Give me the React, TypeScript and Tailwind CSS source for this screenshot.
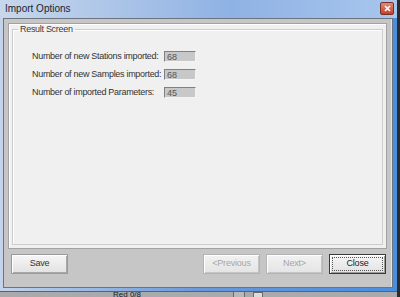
const font = { fontFamily: "'Liberation Sans', Arial, sans-serif" };

const rows = [
  { label: "Number of new Stations imported:", value: "68" },
  { label: "Number of new Samples imported:", value: "68" },
  { label: "Number of imported Parameters:", value: "45" },
];

const Btn = ({ label, disabled, focused }: { label: string; disabled?: boolean; focused?: boolean }) => (
  <button
    className={
      focused
        ? "w-[57px] h-[20px] p-[2px] border border-[#3a3a3a] bg-gradient-to-b from-[#f6f6f6] to-[#e2e2e2] shadow-[inset_1px_1px_0_#fff,inset_-1px_-1px_0_#9c9c9c]"
        : disabled
        ? "w-[57px] h-[20px] p-[2px] border border-[#b4b4b4] bg-gradient-to-b from-[#f2f2f2] to-[#e4e4e4] shadow-[inset_1px_1px_0_#fff,inset_-1px_-1px_0_#c4c4c4]"
        : "w-[57px] h-[20px] p-[2px] border border-[#9a9a9a] bg-gradient-to-b from-[#f6f6f6] to-[#e2e2e2] shadow-[inset_1px_1px_0_#fff,inset_-1px_-1px_0_#a8a8a8]"
    }
  >
    <span
      className={
        "flex h-full items-center justify-center text-[9px] tracking-[-0.2px] " +
        (focused ? "border border-dotted border-[#555] text-[#222]" : "") +
        (disabled ? "text-[#a6a6a6]" : "") +
        (!focused && !disabled ? "text-[#333]" : "")
      }
      style={font}
    >
      {label}
    </span>
  </button>
);

export default function App() {
  return (
    <div className="w-[400px] h-[297px] flex bg-[#2e3032] overflow-hidden" style={font}>
      <div className="w-[397px] flex flex-col">
        {/* Window */}
        <div className="h-[291px] flex flex-col bg-gradient-to-r from-[#c4d4ea] via-[#6a98da] to-[#4a8ee0]">
          {/* Title bar */}
          <div className="h-[18px] flex items-center justify-between pl-[5px] pr-[3px] bg-gradient-to-r from-[#c8d7eb] via-[#8fb2e4] via-[58%] to-[#a8c6ee]">
            <span className="text-[10px] text-[#1c2230] leading-none">Import Options</span>
            <div className="w-[14px] h-[13px] mt-[-2px] rounded-[2px] border border-[#7a3026] bg-gradient-to-b from-[#e08a74] to-[#c0402a] flex items-center justify-center">
              <svg width="7" height="7" viewBox="0 0 7 7">
                <path d="M1 1 L6 6 M6 1 L1 6" stroke="#fff" strokeWidth="1.6" />
              </svg>
            </div>
          </div>

          {/* Client area */}
          <div className="flex-1 flex flex-col ml-[3px] mr-[4px] mb-[3px] border border-[#6c7480] bg-[#c6c6c6] shadow-[inset_-1px_0_0_#e4e4e4]">
            <div className="h-[226px] mt-[4px] ml-[4px] mr-[5px] border border-[#a2a2a2] bg-[#f0f0f0] shadow-[inset_1px_1px_0_#fff] px-[3px] pt-[1px] pb-[3px] flex">
              <fieldset className="flex-1 border border-[#cdcdcd] shadow-[inset_1px_1px_0_#fff]">
                <legend className="ml-[5px] px-[2px] text-[9px] tracking-[-0.3px] text-[#3a3a3a] leading-none">Result Screen</legend>
                <div className="grid grid-cols-[132px_32px] gap-y-[7px] mt-[17px] ml-[19px]">
                  {rows.map((r) => (
                    <div key={r.label} className="contents">
                      <span className="text-[9px] tracking-[-0.3px] text-[#333] leading-[11px]">{r.label}</span>
                      <div className="h-[11px] border border-t-[#808080] border-l-[#808080] border-b-[#f4f4f4] border-r-[#f4f4f4] bg-[#c8c8c8] pl-[2px] text-[9px] leading-[10px] text-[#555]">
                        {r.value}
                      </div>
                    </div>
                  ))}
                </div>
              </fieldset>
            </div>

            <div className="flex items-center mt-[5px] pl-[7px] pr-[6px]">
              <Btn label="Save" />
              <div className="flex-1" />
              <div className="flex gap-[6px]">
                <Btn label="<Previous" disabled />
                <Btn label="Next>" disabled />
                <Btn label="Close" focused />
              </div>
            </div>
          </div>
        </div>

        {/* Desktop behind */}
        <div className="flex-1 bg-[#a8aaac] border-t border-[#5a6270] flex items-start overflow-hidden">
          <span className="ml-[113px] mt-[-1px] text-[8px] text-[#222] leading-none">Red 0/8</span>
          <div className="ml-[92px] w-[12px] h-[6px] border-x border-[#6a6a6a] bg-[#b8b8b8]" />
          <div className="ml-[8px] w-[10px] h-[6px] border border-[#6a6a6a] bg-[#dcdcdc]" />
        </div>
      </div>
      <div className="flex-1 bg-[#2a2c2e]" />
    </div>
  );
}
